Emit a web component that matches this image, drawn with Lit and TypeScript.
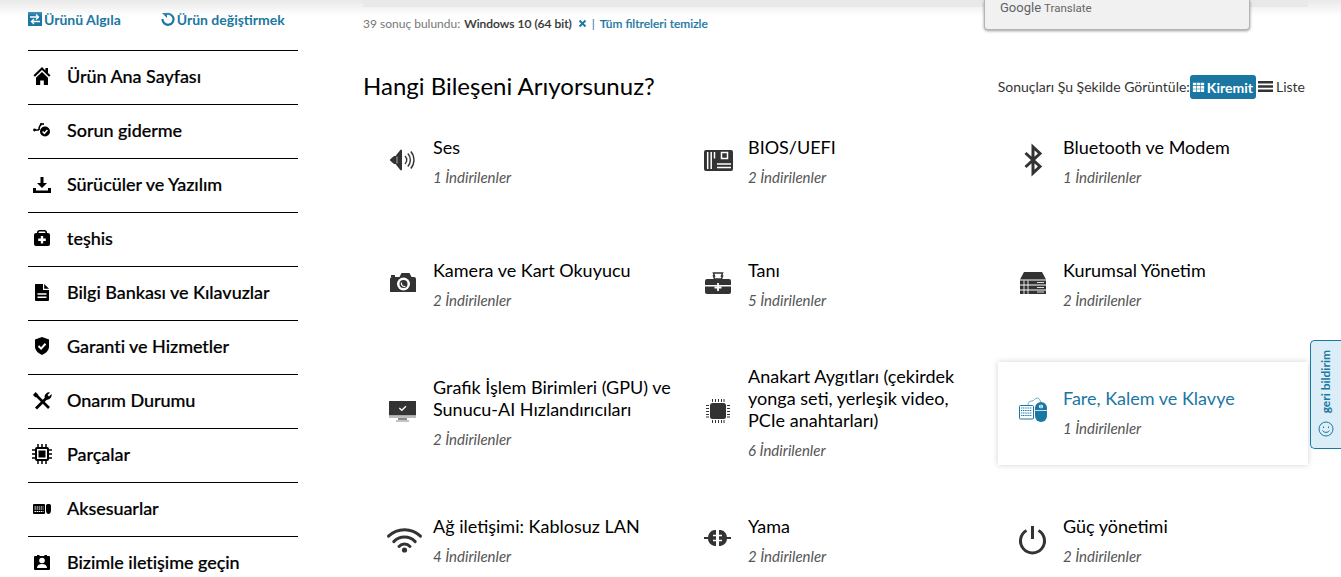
import { LitElement, html, css, svg } from 'lit';
import { customElement } from 'lit/decorators.js';

const W = '#fff';

const navIcons = {
  home: svg`<path d="M13 3 4.500 11.300 6 12.800 13 6l7 6.800 1.500-1.500L19 8.900V4h-2.600v2.400z"/><path d="M7 13.800 13 8l6 5.800V21h-4.200v-4.500h-3.600V21H7z"/>`,
  fix: svg`<circle cx="5.500" cy="12" r="1.400"/><path d="M6 12h4M10 12c0-3 .5-5 3-6" fill="none" stroke="currentColor" stroke-width="1.600"/><path d="M11 6h4" stroke="currentColor" stroke-width="1.600"/><circle cx="16" cy="13.500" r="5"/><path d="m13.600 13.500 1.800 1.800 3-3.200" fill="none" stroke="${W}" stroke-width="1.500"/>`,
  download: svg`<path d="M11.500 5h3v6H18l-5 5-5-5h3.500z"/><path d="M4 16h3v2.500h12V16h3v5H4z"/>`,
  diag: svg`<path d="M8 8V6.500C8 5 9 4 10.500 4h5C17 4 18 5 18 6.500V8h-1.600V6.400c0-.5-.4-.8-.9-.8h-5c-.5 0-.9.3-.9.8V8z"/><rect x="5" y="7" width="16" height="13" rx="2"/><path d="M11.800 10h2.400v2.600h2.600V15h-2.600v2.600h-2.400V15H9.200v-2.400h2.600z" fill="${W}"/>`,
  doc: svg`<path d="M6.500 4H14v6h6v10a1 1 0 0 1-1 1H7a1 1 0 0 1-1-1V4.500z"/><path d="M15.200 4 20 8.800h-4.800z"/><path d="M8.500 14h9M8.500 17.200h9" stroke="${W}" stroke-width="1.500"/>`,
  shield: svg`<path d="m13 3 7 2.400v7.100c0 4-3.400 7-7 8.500-3.600-1.500-7-4.500-7-8.500V5.400z"/><path d="m9.500 12 2.600 2.600 4.400-4.800" fill="none" stroke="${W}" stroke-width="2"/>`,
  tools: svg`<path d="M6.500 6.500 20 20" stroke="currentColor" stroke-width="2.600" fill="none"/><path d="m4 7 2.500-3 3 3-3 2.500z"/><path d="M7 20.500 18 9.500" stroke="currentColor" stroke-width="2.800" fill="none"/><path d="M15.500 9a4.500 4.500 0 0 1 5.500-4.500L18.500 7l1.500 1.500 2.500-2.500A4.500 4.500 0 0 1 17 11.500z"/>`,
  chip: svg`<rect x="6" y="5" width="14" height="14" rx="2"/><rect x="8" y="7" width="10" height="10" fill="${W}"/><rect x="9.500" y="8.500" width="7" height="7"/><path d="M3 8h3M3 12h3M3 16h3M20 8h3M20 12h3M20 16h3M9 2v3M13 2v3M17 2v3M9 19v3M13 19v3M17 19v3" stroke="currentColor" stroke-width="1.500"/>`,
  acc: svg`<rect x="4" y="8" width="12" height="10" rx="1"/><path d="M5.500 11h9M5.500 13h9M5.500 15.500h9" stroke="${W}" stroke-width="1" stroke-dasharray="1.500 .6"/><path d="M17 9.500c0-1 1-1.500 2.500-1.500s2.500.5 2.500 1.500V14c0 2.500-1 4-2.500 4S17 16.500 17 14z"/>`,
  contact: svg`<path d="M6 6h2V5h2.500v1h5V5H18v1h2a1 1 0 0 1 1 1v12a1 1 0 0 1-1 1H6a1 1 0 0 1-1-1V7a1 1 0 0 1 1-1z"/><circle cx="13" cy="10.500" r="2.800" fill="${W}"/><path d="M8 18c0-2.800 2-4 5-4s5 1.200 5 4z" fill="${W}"/>`,
};

const nav: [string, keyof typeof navIcons][] = [
  ['Ürün Ana Sayfası', 'home'],
  ['Sorun giderme', 'fix'],
  ['Sürücüler ve Yazılım', 'download'],
  ['teşhis', 'diag'],
  ['Bilgi Bankası ve Kılavuzlar', 'doc'],
  ['Garanti ve Hizmetler', 'shield'],
  ['Onarım Durumu', 'tools'],
  ['Parçalar', 'chip'],
  ['Aksesuarlar', 'acc'],
  ['Bizimle iletişime geçin', 'contact'],
];

const compIcons = {
  audio: svg`<path d="M7 19.500 11 16h1.500l5-6.200H19v20.400h-1.500l-5-6.200H11l-4-3.500z"/><path d="M14 16.500v7" stroke="${W}" stroke-width="1.200" opacity=".5"/><path d="M22 16a5.500 5.500 0 0 1 0 8M24.800 13.500a9.500 9.500 0 0 1 0 13M27.800 11.500a13 13 0 0 1 0 17" fill="none" stroke="currentColor" stroke-width="1.400"/>`,
  bios: svg`<rect x="6" y="10" width="29" height="21" rx="2"/><path d="M9.700 12v17M13.200 12v17M16.500 12v6.500M19 24h14M19 27.500h14" stroke="${W}" stroke-width="1.500" fill="none"/><rect x="23.500" y="12.500" width="6" height="6" fill="none" stroke="${W}" stroke-width="1.500"/>`,
  bt: svg`<path d="M12.500 13 27 26.500 20 33V7l7 6.500L12.500 27" fill="none" stroke="currentColor" stroke-width="3" stroke-linejoin="miter"/>`,
  cam: svg`<path d="M8 12h4v2H8z"/><path d="M7 16a2 2 0 0 1 2-2h7.500l2-4h8l2 4H31a2 2 0 0 1 2 2v13H7z"/><circle cx="20.500" cy="21" r="6.500" fill="${W}"/><circle cx="20.500" cy="21" r="4"/><path d="M18.500 19.500a3 3 0 0 0 3.800 3.800" fill="none" stroke="${W}" stroke-width="1.200"/>`,
  tool: svg`<path d="M15.500 10h9l-1 3h1l-1 3h-7l-1-3h1z" fill="none" stroke="currentColor" stroke-width="1.500"/><path d="M9 16h22a2 2 0 0 1 2 2v4H7v-4a2 2 0 0 1 2-2zM7 23.500h26V29a2 2 0 0 1-2 2H9a2 2 0 0 1-2-2z"/><path d="M20 20v8M16.500 24.500h7" stroke="${W}" stroke-width="1.800"/>`,
  server: svg`<path d="M11 9h18l4 7.500H7z"/><rect x="7" y="17.500" width="26" height="4"/><rect x="7" y="22.500" width="26" height="4"/><rect x="7" y="27.500" width="26" height="3.500"/><path d="M24 19.500h7M24 24.500h7M24 29h7M11 17.500v13.500M15 17.500v13.500" stroke="${W}" stroke-width="1" opacity=".85"/>`,
  monitor: svg`<rect x="6" y="10" width="27" height="14.500"/><path d="M6 24.500h27V27H6z" fill="#bbb"/><path d="M15 27h9v2H15zM13 29.500h13v1H13z" fill="#888"/><path d="m16.300 17 2.500 2.300 4.200-4" fill="none" stroke="${W}" stroke-width="1.300"/>`,
  cpu: svg`<rect x="12" y="12" width="16" height="16" rx="2.500"/><path d="M8 14.500h3M8 17.500h3M8 20.500h3M8 23.500h3M8 26h3M29 14.500h3M29 17.500h3M29 20.500h3M29 23.500h3M29 26h3M14.500 8v3M17.500 8v3M20.500 8v3M23.500 8v3M26 8v3M14.500 29v3M17.500 29v3M20.500 29v3M23.500 29v3M26 29v3" stroke="currentColor" stroke-width="1"/>`,
  kbm: svg`<rect x="6.500" y="14.500" width="14" height="13.500" rx="1" fill="none" stroke="currentColor"/><path d="M8 17h11M8 19.500h11M8 22h11M8 24.500h11" stroke="currentColor" stroke-width="1" stroke-dasharray="1.200 .6"/><path d="M15 14c0-2 1-4 4-4 2 0 3-3 5-3 2 0 3 2 4 4" fill="none" stroke="currentColor" stroke-width=".6"/><path d="M22 17a6 6 0 0 1 12 0v8a6 6 0 0 1-12 0z"/><path d="M22 19.500h12" stroke="${W}" stroke-width=".8"/><circle cx="28" cy="15.500" r="2" fill="${W}"/><path d="M28 13v6" stroke="currentColor" stroke-width=".8"/>`,
  wifi: svg`<path d="M5.500 17.200a23 23 0 0 1 32 0M10.800 22.600a15 15 0 0 1 21.400 0M16 27.500a7.500 7.500 0 0 1 11 0" fill="none" stroke="currentColor" stroke-width="3" stroke-linecap="round"/><circle cx="21.500" cy="31" r="2.600"/>`,
  plug: svg`<path d="M6 18h5v2H6zM28 18h5v2h-5z"/><path d="M18 11v16h-1.500a7.500 7.500 0 0 1-6.500-8 7.500 7.500 0 0 1 6.500-8zM21 11h1.500a7.500 7.500 0 0 1 6.500 8 7.500 7.500 0 0 1-6.500 8H21z"/><path d="M15 16.500h3M15 21.500h3M21 16.500h3M21 21.500h3" stroke="${W}" stroke-width="1.300"/>`,
  power: svg`<path d="M13.500 11.500a12 12 0 1 0 12 0" fill="none" stroke="currentColor" stroke-width="3"/><path d="M19.500 7v13" stroke="currentColor" stroke-width="3"/>`,
};

const comps: [string, string, keyof typeof compIcons, boolean?][] = [
  ['Ses', '1 İndirilenler', 'audio'],
  ['BIOS/UEFI', '2 İndirilenler', 'bios'],
  ['Bluetooth ve Modem', '1 İndirilenler', 'bt'],
  ['Kamera ve Kart Okuyucu', '2 İndirilenler', 'cam'],
  ['Tanı', '5 İndirilenler', 'tool'],
  ['Kurumsal Yönetim', '2 İndirilenler', 'server'],
  ['Grafik İşlem Birimleri (GPU) ve Sunucu-AI Hızlandırıcıları', '2 İndirilenler', 'monitor'],
  ['Anakart Aygıtları (çekirdek yonga seti, yerleşik video, PCIe anahtarları)', '6 İndirilenler', 'cpu'],
  ['Fare, Kalem ve Klavye', '1 İndirilenler', 'kbm', true],
  ['Ağ iletişimi: Kablosuz LAN', '4 İndirilenler', 'wifi'],
  ['Yama', '2 İndirilenler', 'plug'],
  ['Güç yönetimi', '2 İndirilenler', 'power'],
];

@customElement('app-root')
export class AppRoot extends LitElement {
  static override styles = css`
    :host {
      display: block;
      position: relative;
      height: 577px;
      overflow: hidden;
      background: #fff;
      font-family: Lato, sans-serif;
      color: #000;
    }
    .page { display: flex; padding-left: 28px; }

    /* sidebar */
    .side { width: 270px; flex: none; }
    .top-links { display: flex; height: 50px; align-items: center; padding-bottom: 12px; box-sizing: border-box; font-size: 14px; font-weight: 700; color: #1a76a3; }
    .top-links a { display: flex; align-items: center; gap: 2px; }
    .top-links a + a { margin-left: 40px; }
    .top-links svg { width: 14px; height: 14px; fill: currentColor; flex: none; }
    .nav-row { display: flex; align-items: center; height: 54px; box-sizing: border-box; padding-bottom: 4px; border-top: 1px solid #000; font-size: 18px; font-weight: 500; letter-spacing: -.05px; -webkit-text-stroke: .2px #000; }
    .nav-row svg { width: 26px; height: 24px; margin: 0 12px 0 1px; flex: none; fill: currentColor; }

    /* main */
    .main { width: 945px; margin-left: 65px; flex: none; }
    .bar { height: 7px; background: #e7e7e7; }
    .filters { display: flex; align-items: center; height: 32px; font-size: 12px; color: #777; }
    .filters .val { margin-left: 4px; color: #333; font-weight: 500; -webkit-text-stroke: .2px #333; }
    .filters .x { margin-left: 6px; width: 9px; height: 9px; }
    .filters .sep { margin: 0 5px; color: #1a76a3; }
    .filters .clear { color: #1a76a3; font-weight: 500; -webkit-text-stroke: .2px #1a76a3; }
    .head { display: flex; justify-content: space-between; align-items: center; height: 50px; margin-top: 21px; }
    h2 { margin: 0; font-size: 24px; font-weight: 400; }
    .view { display: flex; align-items: center; margin: 2px 3px 0 0; font-size: 14px; color: #333; }
    .tile { display: flex; align-items: center; gap: 2px; height: 24px; margin: 2px 2px 0 0; padding: 0 3px 0 2px; border-radius: 3px; background: #1a76a3; color: #fff; font-weight: 700; }
    .tile svg { width: 13px; height: 15px; fill: currentColor; }
    .list svg { width: 15px; height: 15px; fill: currentColor; }
    .list { display: flex; align-items: center; gap: 3px; }
    .grid { display: grid; grid-template-columns: repeat(3, 310px); column-gap: 5px; row-gap: 30px; margin: 6px 0 0 5px; }
    .cell { display: flex; align-items: center; gap: 10px; min-height: 93px; box-sizing: border-box; padding: 3px 0 3px 15px; background: #fff; }
    .cell svg { width: 40px; height: 40px; margin-bottom: 5px; flex: none; fill: currentColor; color: #333; }
    .text { max-width: 240px; margin-bottom: 3px; }
    .title { font-size: 18px; line-height: 22px; }
    .sub { margin-top: 10px; font-size: 15px; line-height: 18px; font-style: italic; color: #555; }
    .cell.on { box-shadow: 0 0 6px rgba(0, 0, 0, .18); }
    .cell.on .title { color: #1a76a3; }
    .cell.on svg { color: #1a76a3; }

    /* overlays */
    .fade { position: absolute; inset: 0 0 auto 0; height: 16px; background: linear-gradient(#e9e9e9, rgba(255, 255, 255, 0)); pointer-events: none; }
    .translate { position: absolute; left: 984px; top: 0; width: 266px; height: 30px; box-sizing: border-box; padding-left: 15px; background: #f1f1f1; border: 1px solid #b5b5b5; border-top: 0; border-radius: 0 0 4px 4px; box-shadow: 0 1px 3px rgba(0, 0, 0, .4); font: 11.500px/15px Roboto, sans-serif; color: #666; }
    .translate b { font: 400 13px/15px Roboto, sans-serif; color: #5f6368; margin-right: 3px; }
    .feedback { position: absolute; left: 1310px; top: 340px; width: 31px; height: 109px; box-sizing: border-box; display: flex; flex-direction: column; align-items: center; justify-content: flex-end; padding-bottom: 11px; gap: 8px; background: #dbeef8; border: 1px solid #1a76a3; border-right: 0; border-radius: 5px 0 0 5px; color: #1a76a3; }
    .feedback span { writing-mode: vertical-rl; transform: rotate(180deg); font-size: 12px; font-weight: 700; line-height: 14px; }
    .feedback svg { width: 16px; height: 16px; flex: none; }
  `;

  override render() {
    return html`
      <div class="page">
        <aside class="side">
          <div class="top-links">
            <a>
              <svg viewBox="0 0 14 14"><rect width="14" height="14"/><path d="M2 5h8M8 2.500 10.500 5 8 7.500M12 9.500H4M6 7 3.500 9.500 6 12" fill="none" stroke="#fff" stroke-width="1.400"/></svg>
              Ürünü Algıla
            </a>
            <a>
              <svg viewBox="0 0 14 14" style="fill:none"><path d="M3.800 2.800A5.500 5.500 0 1 1 1.500 7" stroke="currentColor" stroke-width="2.200"/><path d="M1 1h5v5z" fill="currentColor"/></svg>
              Ürün değiştirmek
            </a>
          </div>
          ${nav.map(
            ([label, icon]) => html`<div class="nav-row">
              <svg viewBox="0 0 26 24">${navIcons[icon]}</svg>
              ${label}
            </div>`,
          )}
        </aside>
        <main class="main">
          <div class="bar"></div>
          <div class="filters">
            39 sonuç bulundu:
            <span class="val">Windows 10 (64 bit)</span>
            <svg class="x" viewBox="0 0 9 9"><path d="m1.500 1.500 6 6m0-6-6 6" stroke="#1a76a3" stroke-width="1.800"/></svg>
            <span class="sep">|</span>
            <span class="clear">Tüm filtreleri temizle</span>
          </div>
          <div class="head">
            <h2>Hangi Bileşeni Arıyorsunuz?</h2>
            <div class="view">
              Sonuçları Şu Şekilde Görüntüle:
              <span class="tile">
                <svg viewBox="0 0 15 15"><path d="M1 2h4v3H1zM5.700 2h3.600v3H5.700zM10 2h4v3h-4zM1 5.800h4v3H1zM5.700 5.800h3.600v3H5.700zM10 5.800h4v3h-4zM1 9.600h4v3H1zM5.700 9.600h3.600v3H5.700zM10 9.600h4v3h-4z"/></svg>
                Kiremit
              </span>
              <span class="list">
                <svg viewBox="0 0 15 15"><path d="M0 2h15v2.400H0zM0 6.300h15v2.400H0zM0 10.600h15V13H0z"/></svg>
                Liste
              </span>
            </div>
          </div>
          <div class="grid">
            ${comps.map(
              ([title, sub, icon, on]) => html`<div class="cell ${on ? 'on' : ''}">
                <svg viewBox="0 0 40 40">${compIcons[icon]}</svg>
                <div class="text">
                  <div class="title">${title}</div>
                  <div class="sub">${sub}</div>
                </div>
              </div>`,
            )}
          </div>
        </main>
      </div>
      <div class="fade"></div>
      <div class="translate"><b>Google</b>Translate</div>
      <div class="feedback">
        <span>geri bildirim</span>
        <svg viewBox="0 0 16 16" fill="none" stroke="currentColor"><circle cx="8" cy="8" r="7"/><path d="M4.500 9.500c1.500 2.500 5.500 2.500 7 0" /><path d="M5.500 5.500v1.500M10.500 5.500v1.500"/></svg>
      </div>
    `;
  }
}
